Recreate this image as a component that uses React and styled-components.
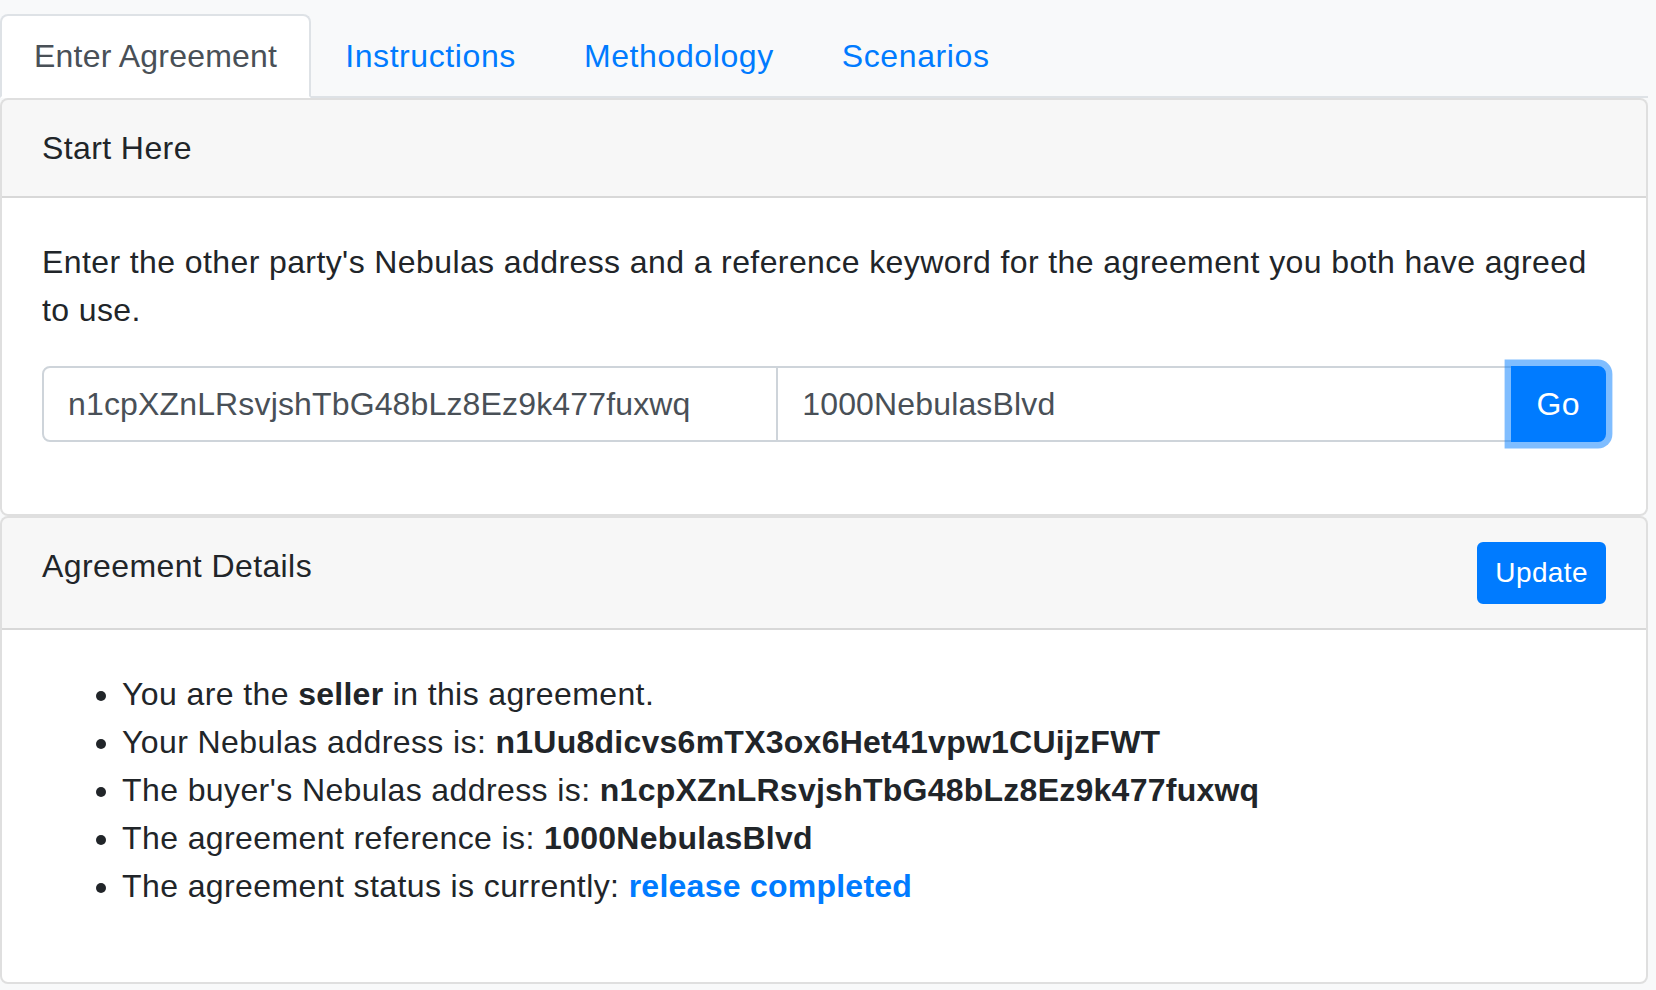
import React from "react";
import styled, { createGlobalStyle } from "styled-components";

const Global = createGlobalStyle`
  html, body { margin: 0; padding: 0; }
  body {
    background: #f8f9fa;
    font-family: "Liberation Sans", Arial, sans-serif;
    font-size: 32px;
    line-height: 48px;
    letter-spacing: 0.4px;
    color: #212529;
  }
  * { box-sizing: border-box; }
`;

const Page = styled.div`
  width: 1648px;
  padding-top: 14px;
`;

const Tabs = styled.ul`
  display: flex;
  list-style: none;
  margin: 0;
  padding: 0;
  border-bottom: 2px solid #dee2e6;
`;

const Tab = styled.li`
  margin-bottom: -2px;
`;

const TabLink = styled.a`
  display: block;
  padding: 16px 32px;
  line-height: 48px;
  border: 2px solid transparent;
  border-radius: 8px 8px 0 0;
  text-decoration: none;
  cursor: pointer;
  letter-spacing: ${(p) => (p.$active ? "0.2px" : "0.6px")};
  color: ${(p) => (p.$active ? "#495057" : "#007bff")};
  background: ${(p) => (p.$active ? "#fff" : "transparent")};
  border-color: ${(p) => (p.$active ? "#dee2e6 #dee2e6 #fff" : "transparent")};
`;

const Card = styled.section`
  background: #fff;
  border: 2px solid rgba(0, 0, 0, 0.125);
  border-radius: 8px;
  overflow: hidden;
`;

const CardHeader = styled.div`
  display: flex;
  justify-content: space-between;
  align-items: flex-start;
  padding: 24px 40px;
  background: rgba(0, 0, 0, 0.03);
  border-bottom: 2px solid rgba(0, 0, 0, 0.125);
`;

const CardBody = styled.div`
  padding: 40px;
`;

const Para = styled.p`
  margin: 0 0 32px;
`;

const InputGroup = styled.div`
  display: flex;
  margin-bottom: 32px;
`;

const Input = styled.input`
  flex: 1 1 0;
  min-width: 0;
  height: 76px;
  padding: 12px 24px;
  font-family: inherit;
  font-size: 32px;
  line-height: 48px;
  letter-spacing: 0.15px;
  color: #495057;
  background: #fff;
  border: 2px solid #ced4da;
  border-radius: ${(p) => (p.$first ? "8px 0 0 8px" : "0")};
  margin-left: ${(p) => (p.$first ? "0" : "-2px")};
  outline: none;
`;

const Button = styled.button`
  font-family: inherit;
  color: #fff;
  background: #007bff;
  border: 2px solid #007bff;
  cursor: pointer;
  letter-spacing: 0.4px;
  font-size: ${(p) => (p.$small ? "28px" : "32px")};
  line-height: ${(p) => (p.$small ? "42px" : "48px")};
  padding: ${(p) => (p.$small ? "8px 16px" : "12px 24px")};
  border-radius: ${(p) => (p.$append ? "0 8px 8px 0" : p.$small ? "6px" : "8px")};
  margin-left: ${(p) => (p.$append ? "-2px" : "0")};
  box-shadow: ${(p) => (p.$focus ? "0 0 0 6.4px rgba(0, 123, 255, 0.5)" : "none")};
  position: relative;
`;

const List = styled.ul`
  margin: 0 0 32px;
  padding-left: 80px;
`;

const Item = styled.li`
  line-height: 48px;
`;

const Strong = styled.b`
  font-weight: bold;
  letter-spacing: 0.25px;
`;

const Status = styled.span`
  font-weight: bold;
  letter-spacing: 0.25px;
  color: #007bff;
`;

export default function App() {
  return (
    <>
      <Global />
      <Page>
        <Tabs>
          <Tab><TabLink $active>Enter Agreement</TabLink></Tab>
          <Tab><TabLink>Instructions</TabLink></Tab>
          <Tab><TabLink>Methodology</TabLink></Tab>
          <Tab><TabLink>Scenarios</TabLink></Tab>
        </Tabs>
        <Card>
          <CardHeader>Start Here</CardHeader>
          <CardBody>
            <Para>
              Enter the other party's Nebulas address and a reference keyword for the agreement you both have agreed to use.
            </Para>
            <InputGroup>
              <Input $first defaultValue="n1cpXZnLRsvjshTbG48bLz8Ez9k477fuxwq" />
              <Input defaultValue="1000NebulasBlvd" />
              <Button $append $focus>Go</Button>
            </InputGroup>
          </CardBody>
        </Card>
        <Card>
          <CardHeader>
            <span>Agreement Details</span>
            <Button $small>Update</Button>
          </CardHeader>
          <CardBody>
            <List>
              <Item>You are the <Strong>seller</Strong> in this agreement.</Item>
              <Item>Your Nebulas address is: <Strong>n1Uu8dicvs6mTX3ox6Het41vpw1CUijzFWT</Strong></Item>
              <Item>The buyer's Nebulas address is: <Strong>n1cpXZnLRsvjshTbG48bLz8Ez9k477fuxwq</Strong></Item>
              <Item>The agreement reference is: <Strong>1000NebulasBlvd</Strong></Item>
              <Item>The agreement status is currently: <Status>release completed</Status></Item>
            </List>
          </CardBody>
        </Card>
      </Page>
    </>
  );
}
